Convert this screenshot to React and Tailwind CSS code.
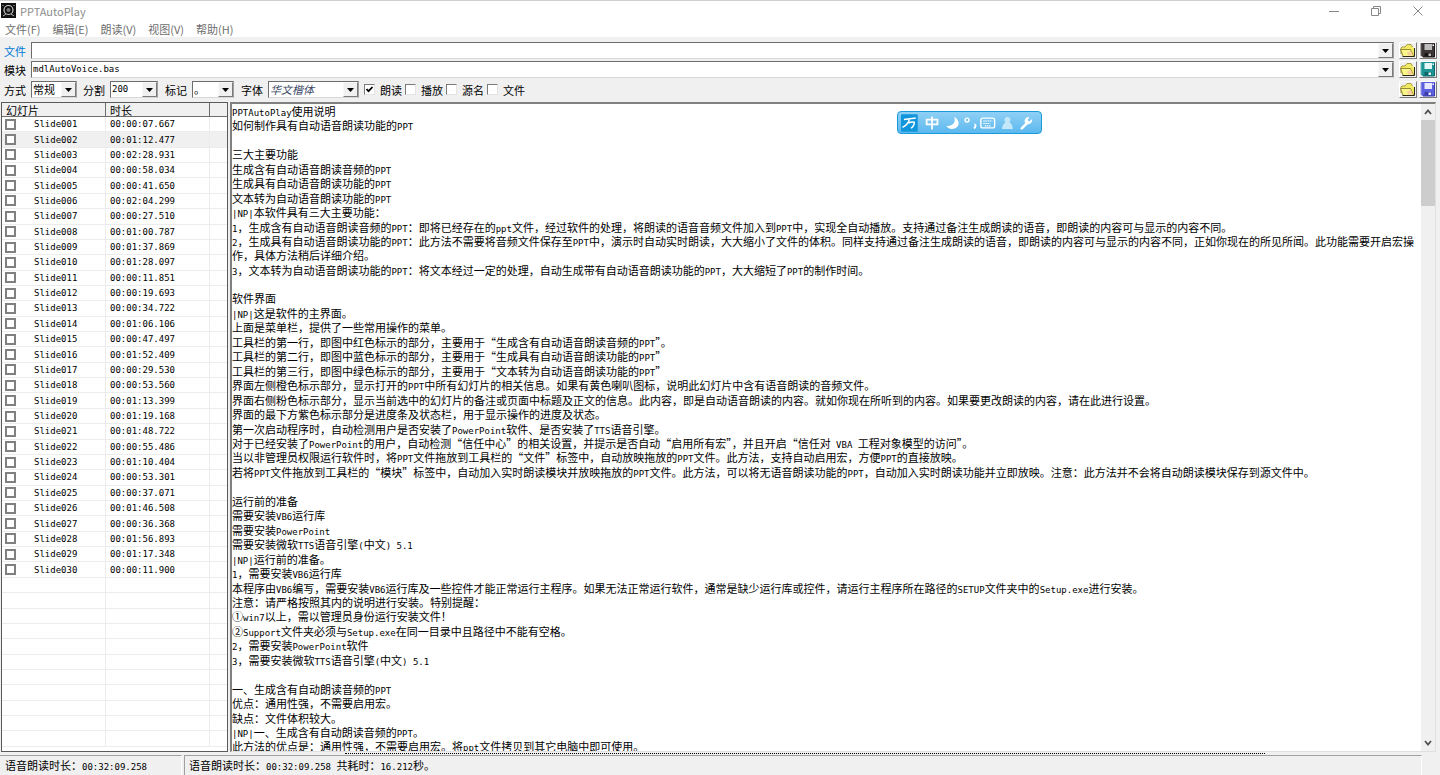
import React from 'react';

const slides = [
  '00:00:07.667', '00:01:12.477', '00:02:28.931', '00:00:58.034', '00:00:41.650', '00:02:04.299',
  '00:00:27.510', '00:01:00.787', '00:01:37.869', '00:01:28.097', '00:00:11.851', '00:00:19.693',
  '00:00:34.722', '00:01:06.106', '00:00:47.497', '00:01:52.409', '00:00:29.530', '00:00:53.560',
  '00:01:13.399', '00:01:19.168', '00:01:48.722', '00:00:55.486', '00:01:10.404', '00:00:53.301',
  '00:00:37.071', '00:01:46.508', '00:00:36.368', '00:01:56.893', '00:01:17.348', '00:00:11.900',
].map((time, i) => ({ name: 'Slide' + String(i + 1).padStart(3, '0'), time }));

const emptyRows = Array.from({ length: 11 }, (_, i) => i);

const lines = [
  'PPTAutoPlay使用说明',
  '如何制作具有自动语音朗读功能的PPT',
  '',
  '三大主要功能',
  '生成含有自动语音朗读音频的PPT',
  '生成具有自动语音朗读功能的PPT',
  '文本转为自动语音朗读功能的PPT',
  '|NP|本软件具有三大主要功能：',
  '1，生成含有自动语音朗读音频的PPT：即将已经存在的ppt文件，经过软件的处理，将朗读的语音音频文件加入到PPT中，实现全自动播放。支持通过备注生成朗读的语音，即朗读的内容可与显示的内容不同。',
  '2，生成具有自动语音朗读功能的PPT：此方法不需要将音频文件保存至PPT中，演示时自动实时朗读，大大缩小了文件的体积。同样支持通过备注生成朗读的语音，即朗读的内容可与显示的内容不同，正如你现在的所见所闻。此功能需要开启宏操作，具体方法稍后详细介绍。',
  '3，文本转为自动语音朗读功能的PPT：将文本经过一定的处理，自动生成带有自动语音朗读功能的PPT，大大缩短了PPT的制作时间。',
  '',
  '软件界面',
  '|NP|这是软件的主界面。',
  '上面是菜单栏，提供了一些常用操作的菜单。',
  '工具栏的第一行，即图中红色标示的部分，主要用于“生成含有自动语音朗读音频的PPT”。',
  '工具栏的第二行，即图中蓝色标示的部分，主要用于“生成具有自动语音朗读功能的PPT”',
  '工具栏的第三行，即图中绿色标示的部分，主要用于“文本转为自动语音朗读功能的PPT”',
  '界面左侧橙色标示部分，显示打开的PPT中所有幻灯片的相关信息。如果有黄色喇叭图标，说明此幻灯片中含有语音朗读的音频文件。',
  '界面右侧粉色标示部分，显示当前选中的幻灯片的备注或页面中标题及正文的信息。此内容，即是自动语音朗读的内容。就如你现在所听到的内容。如果要更改朗读的内容，请在此进行设置。',
  '界面的最下方紫色标示部分是进度条及状态栏，用于显示操作的进度及状态。',
  '第一次启动程序时，自动检测用户是否安装了PowerPoint软件、是否安装了TTS语音引擎。',
  '对于已经安装了PowerPoint的用户，自动检测“信任中心”的相关设置，并提示是否自动“启用所有宏”，并且开启“信任对 VBA 工程对象模型的访问”。',
  '当以非管理员权限运行软件时，将PPT文件拖放到工具栏的“文件”标签中，自动放映拖放的PPT文件。此方法，支持自动启用宏，方便PPT的直接放映。',
  '若将PPT文件拖放到工具栏的“模块”标签中，自动加入实时朗读模块并放映拖放的PPT文件。此方法，可以将无语音朗读功能的PPT，自动加入实时朗读功能并立即放映。注意：此方法并不会将自动朗读模块保存到源文件中。',
  '',
  '运行前的准备',
  '需要安装VB6运行库',
  '需要安装PowerPoint',
  '需要安装微软TTS语音引擎(中文) 5.1',
  '|NP|运行前的准备。',
  '1，需要安装VB6运行库',
  '本程序由VB6编写，需要安装VB6运行库及一些控件才能正常运行主程序。如果无法正常运行软件，通常是缺少运行库或控件，请运行主程序所在路径的SETUP文件夹中的Setup.exe进行安装。',
  '注意：请严格按照其内的说明进行安装。特别提醒：',
  '①win7以上，需以管理员身份运行安装文件！',
  '②Support文件夹必须与Setup.exe在同一目录中且路径中不能有空格。',
  '2，需要安装PowerPoint软件',
  '3，需要安装微软TTS语音引擎(中文) 5.1',
  '',
  '一、生成含有自动朗读音频的PPT',
  '优点：通用性强，不需要启用宏。',
  '缺点：文件体积较大。',
  '|NP|一、生成含有自动朗读音频的PPT。',
  '此方法的优点是：通用性强，不需要启用宏。将ppt文件拷贝到其它电脑中即可使用。',
];

/* Latin runs are set in a half-width monospace face beside the full-width Chinese. */
function Mixed({ text }) {
  return text.split(/([\x20-\x7e]+)/).map((part, i) =>
    i % 2 ? (
      <span key={i} className="font-['DejaVu_Sans_Mono',monospace] text-[9px] leading-none whitespace-pre">{part}</span>
    ) : part
  );
}

function Combo({ label, value, options = [], className = '', textClass = '' }) {
  return (
    <div className={'relative flex h-[17px] border border-[#6d6d6d] border-r-[#a0a0a0] border-b-[#d8d8d8] bg-white ' + className}>
      <select
        aria-label={label}
        defaultValue={value}
        className={'h-full w-full appearance-none truncate bg-white pr-4 pl-px leading-[15px] outline-none ' + textClass}
      >
        <option>{value}</option>
        {options.map((o) => <option key={o}>{o}</option>)}
      </select>
      <span className="pointer-events-none absolute inset-y-0 right-0 flex w-[15px] items-center justify-center border border-[#f8f8f8] border-r-[#7a7a7a] border-b-[#7a7a7a] bg-[#f0f0f0]">
        <svg viewBox="0 0 7 4" className="h-1 w-[7px]"><path d="M0 0h7L3.5 4z" fill="#000" /></svg>
      </span>
    </div>
  );
}

function ToolButton({ label, children }) {
  return (
    <button type="button" aria-label={label} className="flex h-[17px] w-[18px] items-center justify-center border border-white border-r-[#7a7a7a] border-b-[#7a7a7a] bg-[#f0f0f0]">
      {children}
    </button>
  );
}

function FolderIcon() {
  return (
    <svg viewBox="0 0 16 15" className="h-[15px] w-4">
      <path d="M1 11V5l1-1h3l2-2.500h4L12.500 4 14 5v8H3z" fill="#f2ea62" />
      <path d="M1 11V5l1-1h3l2-2.500h4L12.500 4" fill="none" stroke="#a0943a" strokeWidth=".9" />
      <path d="M.5 6.500h10l3 6.500H3z" fill="#fbf68c" />
      <path d="M.5 6.500h10l3 6.500M.5 6.500L3 13" fill="none" stroke="#7c7228" strokeWidth=".8" />
      <path d="M7 9.500l4-1.500 2 4.500H8z" fill="#f6cf9c" />
      <path d="M2.500 13.500h12V5" fill="none" stroke="#2c2810" strokeWidth="1" />
    </svg>
  );
}

function DiskIcon({ color, light, dark, shine }) {
  return (
    <svg viewBox="0 0 16 15" className="h-[15px] w-4">
      <path d="M1 0h14v14H2.500L1 12.500z" fill={color} />
      <path d="M1 12.500V0" stroke={shine} strokeWidth="1" />
      <path d="M14.500 1v13H3" fill="none" stroke={dark} strokeWidth="1" />
      <path d="M4.500 1h7.500v6H4.500z" fill={light} />
      <path d="M12.500 1.500H14v1.500h-1.500z" fill="#fff" />
      <path d="M4.500 10h7v3.500h-7z" fill={dark} />
      <path d="M8.500 10.500H11v2.500H8.500z" fill={light} />
    </svg>
  );
}

function Check({ label, checked }) {
  return (
    <label className="flex items-center gap-[5px]">
      <span className="relative flex size-[11px]">
        <input type="checkbox" defaultChecked={checked} className="peer size-[11px] appearance-none border border-[#7a7a7a] border-r-[#e4e4e4] border-b-[#e4e4e4] bg-white" />
        <svg viewBox="0 0 11 11" className="pointer-events-none absolute inset-0 hidden size-[11px] peer-checked:block">
          <path d="M2.500 5l2 2.200L8.500 3" fill="none" stroke="#000" strokeWidth="1.800" />
        </svg>
      </span>
      {label}
    </label>
  );
}

function ImeBar() {
  return (
    <div className="absolute top-[7px] left-[665px] flex h-[23px] w-[145px] items-center rounded-sm border border-[#1a9ad8] bg-gradient-to-b from-[#8fd0f5] to-[#5bb8ee] px-[3px] text-white">
      <svg viewBox="0 0 139 18" className="h-[18px] w-full" fill="none" stroke="#fff">
        <rect x="0" y="0" width="17" height="18" rx="1" fill="#1296db" stroke="none" />
        <path d="M3 5.500l12-1.500M8.500 5.500C7.500 9 5.500 11.500 1.500 13.500M7.500 9c3-1 6-1.500 6-.5 0 2-1.500 5-3.500 5.500" strokeWidth="1.500" />
        <path d="M26 5.500h11v5H26zM31.500 2.500v13" strokeWidth="1.800" />
        <path d="M54 3c2 6-2 9.500-8 9 3 5 12 3.500 12.500-2.500 0-3-2-5.500-4.500-6.500z" fill="#fff" stroke="none" />
        <circle cx="67" cy="6" r="2" strokeWidth="1.400" />
        <path d="M74.500 10.500c1.500 0 1.500 2.500-.5 4" strokeWidth="2" />
        <rect x="81" y="4" width="14" height="10" rx="2" strokeWidth="1.400" />
        <path d="M83.500 7h9M83.500 9.500h7M85 12h6" strokeWidth="1.200" strokeDasharray="1.500 .7" />
        <path d="M108 3a2.800 2.800 0 0 1 2 5c2 2 3.500 4 3.500 7h-11c0-3 1.500-5 3.500-7a2.800 2.800 0 0 1 2-5z" fill="#c5e7fa" stroke="none" />
        <path d="M122.500 14.500l5.500-5.500" strokeWidth="2.600" strokeLinecap="round" />
        <path d="M133 5l-3 2.500-1.500-1.500 2-3c-4-.5-6 3-4.500 6 3 2.500 7.500 1 7-4z" fill="#fff" stroke="none" />
      </svg>
    </div>
  );
}

export default function App() {
  return (
    <div className="flex h-screen flex-col overflow-hidden border-t border-[#d0d0d0] bg-[#f0f0f0] font-['Noto_Sans_CJK_SC',sans-serif] text-[11px] leading-[14px] text-black">
      <header className="flex h-[19px] shrink-0 items-center bg-white pl-px text-[#8c8c8c]">
        <svg viewBox="0 0 15 15" className="size-[15px]">
          <path d="M0 0h15v15H0z" fill="#111" />
          <circle cx="7.500" cy="7" r="4.500" fill="none" stroke="#ccc" strokeWidth="1.200" />
          <circle cx="7.500" cy="7" r="2" fill="#777" />
          <path d="M2 13l3-2M13 13l-3-2M2 2v1M13 2v1" stroke="#bbb" />
        </svg>
        <h1 className="ml-1">PPTAutoPlay</h1>
        <div className="ml-auto flex items-center gap-8 pr-[17px]">
          <button type="button" aria-label="最小化"><svg viewBox="0 0 10 10" className="size-[10px]"><path d="M0 5.500h10" stroke="#888" /></svg></button>
          <button type="button" aria-label="还原"><svg viewBox="0 0 10 10" className="size-[10px]" fill="none" stroke="#888"><path d="M.5 2.500h7v7h-7zM2.500 2.500v-2h7v7h-2" /></svg></button>
          <button type="button" aria-label="关闭"><svg viewBox="0 0 10 10" className="size-[10px]"><path d="M.5.5l9 9M9.500.5l-9 9" stroke="#888" /></svg></button>
        </div>
      </header>
      <nav className="flex h-[17px] shrink-0 items-center gap-3 bg-white pl-[5px] text-[#6e6e6e]">
        {['文件(F)', '编辑(E)', '朗读(V)', '视图(V)', '帮助(H)'].map((m) => <button type="button" key={m}>{m}</button>)}
      </nav>

      <div className="flex shrink-0 flex-col gap-0.5 pt-[5px] pr-[3px] pl-1">
        <div className="flex items-center gap-[5px]">
          <span className="text-[#0078d7]">文件</span>
          <Combo label="文件" value="" className="flex-1" />
          <div className="flex gap-0.5">
            <ToolButton label="打开文件"><FolderIcon /></ToolButton>
            <ToolButton label="保存文件"><DiskIcon color="#3c3636" light="#bdbdbd" dark="#1a1616" shine="#6a6464" /></ToolButton>
          </div>
        </div>
        <div className="flex items-center gap-[5px]">
          <span>模块</span>
          <Combo label="模块" value="mdlAutoVoice.bas" className="flex-1" textClass="font-['DejaVu_Sans_Mono',monospace] text-[9px]" />
          <div className="flex gap-0.5">
            <ToolButton label="打开模块"><FolderIcon /></ToolButton>
            <ToolButton label="保存模块"><DiskIcon color="#1f9494" light="#e4f6f6" dark="#0c686c" shine="#6cc4c4" /></ToolButton>
          </div>
        </div>
        <div className="flex items-center gap-[5px] pt-px">
          <span>方式</span>
          <Combo label="方式" value="常规" className="w-[46px]" />
          <span className="ml-px">分割</span>
          <Combo label="分割" value="200" className="w-12" textClass="font-['DejaVu_Sans_Mono',monospace] text-[9px]" />
          <span className="ml-0.5">标记</span>
          <Combo label="标记" value="。" className="w-[42px]" />
          <span className="ml-0.5">字体</span>
          <Combo label="字体" value="华文楷体" className="w-[91px]" textClass="italic text-[#3c4a66]" />
          <div className="flex gap-[3px]">
            <Check label="朗读" checked />
            <Check label="播放" />
            <Check label="源名" />
            <Check label="文件" />
          </div>
          <div className="ml-auto flex gap-0.5">
            <ToolButton label="打开输出"><FolderIcon /></ToolButton>
            <ToolButton label="保存输出"><DiskIcon color="#5c60dc" light="#e8e8ff" dark="#3a3cac" shine="#a0a4f4" /></ToolButton>
          </div>
        </div>
      </div>

      <main className="flex min-h-0 flex-1 gap-0.5 pt-1 pr-1 pl-px">
        <section className="flex w-[227px] shrink-0 flex-col border border-[#5a5a5a] bg-white pb-1">
          <table className="h-full w-full table-fixed border-separate border-spacing-0 text-left">
            <colgroup><col className="w-[104px]" /><col className="w-[104px]" /><col /></colgroup>
            <thead>
              <tr className="h-[14px] bg-[#f0f0f0]">
                <th className="h-[14px] border-r border-b border-[#6d6d6d] p-0 pl-1 font-normal leading-3">幻灯片</th>
                <th className="border-r border-b border-[#6d6d6d] p-0 pl-1 font-normal leading-3">时长</th>
                <th className="border-b border-[#6d6d6d] p-0"></th>
              </tr>
            </thead>
            <tbody className="font-['DejaVu_Sans_Mono',monospace] text-[9px] leading-[10px]">
              {slides.map((s, i) => (
                <tr key={s.name} className={i === 1 ? 'bg-[#f0f0f0]' : ''}>
                  <td className="h-[15px] border-r border-b border-[#ececec] p-0 pl-[3px]">
                    <label className="flex items-center gap-[18px]">
                      <input type="checkbox" className="size-[11px] appearance-none border-2 border-[#808080] bg-white checked:bg-[#404040]" />
                      {s.name}
                    </label>
                  </td>
                  <td className="border-r border-b border-[#ececec] p-0 pl-1">{s.time}</td>
                  <td className="border-b border-[#ececec] p-0"></td>
                </tr>
              ))}
              {emptyRows.map((r) => (
                <tr key={r}>
                  <td className="h-[15px] border-r border-b border-[#ececec] p-0">&nbsp;</td>
                  <td className="border-r border-b border-[#ececec] p-0"></td>
                  <td className="border-b border-[#ececec] p-0"></td>
                </tr>
              ))}
            </tbody>
          </table>
        </section>

        <section className="relative flex min-w-0 flex-1 overflow-hidden border-t-2 border-r border-b border-l-2 border-[#808080] border-r-[#e0e0e0] border-b-[#e0e0e0] bg-white">
          <div
            role="textbox"
            aria-multiline="true"
            aria-label="朗读内容"
            contentEditable
            suppressContentEditableWarning
            className="-mb-[3px] flex min-w-0 flex-1 flex-col justify-between overflow-hidden outline-none"
          >
            {lines.map((l, i) => <p key={i} className="min-h-[14px] shrink-0"><Mixed text={l} /></p>)}
          </div>
          <div className="flex w-[14px] shrink-0 flex-col items-center bg-[#f0f0f0]">
            <svg viewBox="0 0 8 8" className="my-1 size-2"><path d="M1 6l3-3.500L7 6" fill="none" stroke="#505050" strokeWidth="1.800" /></svg>
            <div className="h-[86px] w-full bg-[#cdcdcd]"></div>
            <svg viewBox="0 0 8 8" className="mt-auto mb-1 size-2"><path d="M1 2l3 3.500L7 2" fill="none" stroke="#505050" strokeWidth="1.800" /></svg>
          </div>
          <ImeBar />
        </section>
      </main>

      <div className="mt-px flex h-0.5 shrink-0 justify-center"><div className="ml-[170px] w-[920px] border-t border-dotted border-black"></div></div>
      <footer className="flex h-5 shrink-0 gap-0.5 pr-[18px]">
        <div className="w-[182px] border-t border-r border-[#a0a0a0] border-r-white pt-0.5 pl-[5px]"><Mixed text="语音朗读时长：00:32:09.258" /></div>
        <div className="flex-1 border-t border-r border-l border-[#a0a0a0] border-r-white pt-0.5 pl-1"><Mixed text="语音朗读时长：00:32:09.258 共耗时：16.212秒。" /></div>
      </footer>
    </div>
  );
}
